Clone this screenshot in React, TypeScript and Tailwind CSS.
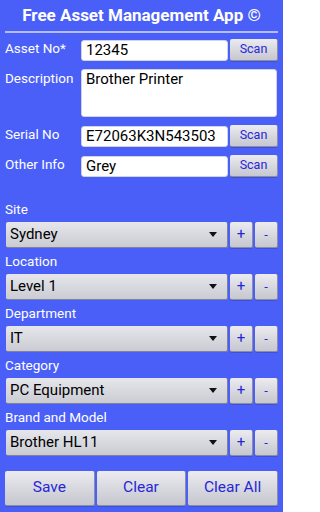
import React from "react";

const font = { fontFamily: "Roboto, 'Noto Sans', Arial, sans-serif" };

function GrayButton({ children, className = "" }: { children: React.ReactNode; className?: string }) {
  return (
    <div
      className={
        "flex items-center justify-center rounded-[2px] bg-gradient-to-b from-[#ebebf0] to-[#c6c7cf] text-[#2727d9] border-b border-r border-[#8c8fa3] shadow-[0_1px_0_rgba(0,0,0,0.15)] " +
        className
      }
    >
      {children}
    </div>
  );
}

function TextRow({ label, value }: { label: string; value: string }) {
  return (
    <div className="flex items-start h-[22px]">
      <div className="w-[76px] text-[13.5px] leading-[18px] text-white">{label}</div>
      <div className="mt-px h-[21px] w-[147px] rounded-[3px] bg-white border border-[#d0d3e6] pl-[4px] text-[15px] leading-[19px] text-black">
        {value}
      </div>
      <GrayButton className="ml-[2px] h-[22px] w-[48px] text-[12.5px]">Scan</GrayButton>
    </div>
  );
}

function SelectGroup({ label, value }: { label: string; value: string }) {
  return (
    <div className="flex flex-col">
      <div className="h-[18px] text-[13.5px] leading-[18px] text-white">{label}</div>
      <div className="mt-[4px] flex h-[26px] items-stretch">
        <div className="ml-px flex w-[222px] items-center justify-between rounded-[2px] bg-gradient-to-b from-[#e6e7ec] to-[#cbccd3] border-b border-r border-[#7f8296] pl-[4px] pr-[10px] text-[15px] text-black">
          <span>{value}</span>
          <svg width="8" height="5" viewBox="0 0 8 5">
            <polygon points="0,0 8,0 4,5" fill="#111" />
          </svg>
        </div>
        <GrayButton className="ml-[2px] w-[23px] text-[15px]">+</GrayButton>
        <GrayButton className="ml-[2px] w-[23px] text-[13px]">-</GrayButton>
      </div>
    </div>
  );
}

export default function App() {
  return (
    <div className="h-[512px] w-[283px] overflow-hidden bg-[#4a5ff8]" style={font}>
      {/* header */}
      <div className="flex h-[31px] items-center justify-center text-[17px] font-bold text-white">
        Free Asset Management App ©
      </div>
      <div className="mx-[5px] h-[2px] bg-[#b4bdfb]" />

      {/* text fields */}
      <div className="mt-[6px] flex flex-col gap-[8px] px-[5px]">
        <TextRow label="Asset No*" value="12345" />
        <div className="flex items-start">
          <div className="w-[76px] text-[13.5px] leading-[18px] text-white">Description</div>
          <div className="h-[48px] w-[196px] rounded-[3px] bg-white border border-[#d0d3e6] pl-[4px] text-[15px] leading-[19px] text-black">
            Brother Printer
          </div>
        </div>
        <TextRow label="Serial No" value="E72063K3N543503" />
        <TextRow label="Other Info" value="Grey" />
      </div>

      {/* dropdowns */}
      <div className="mt-[23px] flex flex-col gap-[4px] px-[5px]">
        <SelectGroup label="Site" value="Sydney" />
        <SelectGroup label="Location" value="Level 1" />
        <SelectGroup label="Department" value="IT" />
        <SelectGroup label="Category" value="PC Equipment" />
        <SelectGroup label="Brand and Model" value="Brother HL11" />
      </div>

      {/* actions */}
      <div className="mt-[15px] grid grid-cols-3 gap-[2px] px-[5px]">
        <GrayButton className="h-[35px] text-[15.5px]">Save</GrayButton>
        <GrayButton className="h-[35px] text-[15.5px]">Clear</GrayButton>
        <GrayButton className="h-[35px] text-[15.5px]">Clear All</GrayButton>
      </div>
    </div>
  );
}
